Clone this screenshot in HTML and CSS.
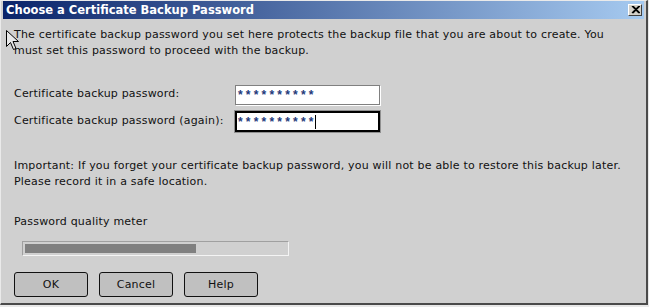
FILE: index.html
```html
<!DOCTYPE html>
<html lang="en">

<head>
    <meta charset="UTF-8">
    <title>Choose a Certificate Backup Password</title>
    <link rel="stylesheet" href="styles.css">
</head>

<body>
    <div class="window">
        <div class="titlebar">
            <span class="title">Choose a Certificate Backup Password</span>
            <div class="close-btn">
                <svg width="9" height="8" viewBox="0 0 9 8">
                    <path d="M1 0 L8 7 M2 0 L9 7 M8 0 L1 7 M9 0 L2 7" stroke="#000" stroke-width="1.2" />
                </svg>
            </div>
        </div>

        <div class="content">
            <p class="intro">The certificate backup password you set here protects the backup file that you are about to create. You must set this password to proceed with the backup.</p>

            <div class="fields">
                <label class="field-label">Certificate backup password:</label>
                <div class="pw-box"><span class="stars">**********</span></div>

                <label class="field-label">Certificate backup password (again):</label>
                <div class="pw-box focused"><span class="stars">**********</span><span class="caret"></span></div>
            </div>

            <p class="warning">Important: If you forget your certificate backup password, you will not be able to restore this backup later. Please record it in a safe location.</p>

            <div class="meter-label">Password quality meter</div>
            <div class="meter">
                <div class="meter-fill" style="width: 65.5%"></div>
            </div>

            <div class="buttons">
                <button>OK</button>
                <button>Cancel</button>
                <button>Help</button>
            </div>
        </div>

        <!-- mouse pointer sitting over the dialog -->
        <svg class="pointer" width="13" height="21" viewBox="0 0 13 21">
            <path d="M0.5 0.5 L0.5 16.5 L4.5 12.5 L7.5 19.5 L10 18.5 L7 11.5 L12.5 11.5 Z" fill="#e8e8e8" stroke="#000" stroke-width="1" />
        </svg>
    </div>
</body>

</html>
```

FILE: styles.css
```css
html {
    background: #e8e8e8;
}

body {
    margin: 0;
    font-family: "DejaVu Sans", Verdana, sans-serif;
    font-size: 11px;
    letter-spacing: 0.2px;
    color: #111;
}

.window {
    position: relative;
    box-sizing: border-box;
    width: 648px;
    height: 305px;
    background: #d0d0d0;
    border-left: 1px solid #eaeaea;
    border-top: 1px solid #eaeaea;
    border-right: 2px solid #4a4a4a;
    border-bottom: 2px solid #4a4a4a;
    display: flex;
    flex-direction: column;
}

.titlebar {
    height: 18px;
    margin: 0 2px 0 2px;
    background: linear-gradient(to right, #0a246a, #a6caf0);
    display: flex;
    align-items: center;
    justify-content: space-between;
    padding: 0 2px 0 3px;
}

.title {
    color: #fff;
    font-weight: bold;
    font-size: 11.5px;
    letter-spacing: 0;
}

.close-btn {
    box-sizing: border-box;
    width: 14px;
    height: 12px;
    background: #d4d0c8;
    border-top: 1px solid #fff;
    border-left: 1px solid #fff;
    border-right: 1px solid #404040;
    border-bottom: 1px solid #404040;
    display: flex;
    align-items: center;
    justify-content: center;
}

.content {
    padding: 0 13px;
}

p {
    margin: 0;
    line-height: 16px;
}

.intro {
    margin-top: 8px;
}

.fields {
    display: grid;
    grid-template-columns: 221px 145px;
    row-gap: 6px;
    align-items: center;
    margin-top: 26px;
}

.field-label {
    line-height: 16px;
    margin-top: -2px;
}

.pw-box {
    box-sizing: border-box;
    height: 20px;
    background: #fff;
    border: 1px solid #808080;
    box-shadow: 1px 1px 0 #fff;
    display: flex;
    align-items: center;
    padding-left: 2px;
}

.pw-box.focused {
    height: 21px;
    border: 2px solid #000;
    box-shadow: 0 0 0 1px #909090;
    padding-left: 1px;
}

.stars {
    color: #23397a;
    font-family: "Liberation Sans", Arial, sans-serif;
    font-size: 12px;
    letter-spacing: 3.2px;
    font-weight: bold;
}

.caret {
    width: 1px;
    height: 14px;
    margin-left: -2px;
    background: #000;
}

.warning {
    margin-top: 26px;
}

.meter-label {
    margin-top: 24px;
    line-height: 16px;
}

.meter {
    box-sizing: border-box;
    width: 267px;
    height: 15px;
    margin: 11px 0 0 8px;
    border: 1px solid #a0a0a0;
    border-right-color: #f4f4f4;
    border-bottom-color: #f4f4f4;
    padding: 2px;
}

.meter-fill {
    height: 100%;
    background: #808080;
}

.buttons {
    display: flex;
    gap: 11px;
    margin-top: 16px;
}

button {
    width: 74px;
    height: 25px;
    font-family: "DejaVu Sans", Verdana, sans-serif;
    font-size: 11px;
    letter-spacing: 0.2px;
    color: #111;
    background: #c0c0c0;
    border: 1px solid #111;
    border-radius: 3px;
    padding: 0;
}

.pointer {
    position: absolute;
    left: 5px;
    top: 29px;
}
```
